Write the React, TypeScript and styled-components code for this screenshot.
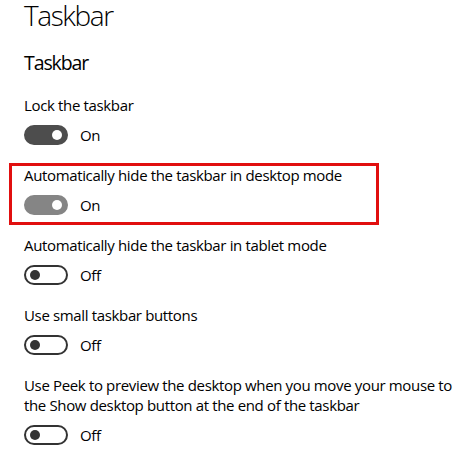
import React from "react";
import styled, { createGlobalStyle } from "styled-components";

const Global = createGlobalStyle`
  html, body { margin: 0; padding: 0; background: #ffffff; }
  body { font-family: "Open Sans", "Noto Sans", sans-serif; color: #000; }
`;

const Page = styled.div`
  padding: 0 6px 0 24px;
  display: flex;
  flex-direction: column;
`;

const Title = styled.h1`
  margin: 0;
  font-weight: 300;
  font-size: 28px;
  line-height: 30px;
  letter-spacing: -1.4px;
`;

const Subtitle = styled.h2`
  margin: 19px 0 18px;
  font-weight: 400;
  font-size: 19.5px;
  line-height: 28px;
  letter-spacing: -1.1px;
`;

const List = styled.div`
  display: flex;
  flex-direction: column;
  gap: 20px;
`;

const Item = styled.div<{ $highlight?: boolean }>`
  position: relative;
  display: flex;
  flex-direction: column;
  gap: 10px;
  ${(p) =>
    p.$highlight
      ? `&::after {
    content: "";
    position: absolute;
    left: -15px;
    top: -2px;
    width: 370px;
    height: 62px;
    border: 3px solid #e10f0f;
    box-sizing: border-box;
  }`
      : ""}
`;

const Label = styled.div`
  font-size: 15px;
  line-height: 20px;
  letter-spacing: -0.35px;
  max-width: 436px;
`;

const ToggleRow = styled.div`
  display: flex;
  align-items: center;
  gap: 12px;
  font-size: 15px;
  line-height: 20px;
  letter-spacing: -0.35px;
`;

const Track = styled.div<{ $on: boolean; $dim?: boolean }>`
  box-sizing: border-box;
  width: 44px;
  height: 20px;
  border-radius: 10px;
  display: flex;
  align-items: center;
  padding: 0 4px;
  justify-content: ${(p) => (p.$on ? "flex-end" : "flex-start")};
  background: ${(p) => (p.$on ? (p.$dim ? "#858585" : "#4d4d4d") : "#fff")};
  border: 2px solid ${(p) => (p.$on ? (p.$dim ? "#858585" : "#4d4d4d") : "#333")};
`;

const Knob = styled.div<{ $on: boolean }>`
  width: 10px;
  height: 10px;
  border-radius: 50%;
  background: ${(p) => (p.$on ? "#fff" : "#333")};
`;

type Setting = { label: string; on: boolean; dim?: boolean; highlight?: boolean };

const settings: Setting[] = [
  { label: "Lock the taskbar", on: true },
  { label: "Automatically hide the taskbar in desktop mode", on: true, dim: true, highlight: true },
  { label: "Automatically hide the taskbar in tablet mode", on: false },
  { label: "Use small taskbar buttons", on: false },
  {
    label:
      "Use Peek to preview the desktop when you move your mouse to the Show desktop button at the end of the taskbar",
    on: false,
  },
];

export default function App() {
  return (
    <>
      <Global />
      <Page>
        <Title>Taskbar</Title>
        <Subtitle>Taskbar</Subtitle>
        <List>
          {settings.map((s) => (
            <Item key={s.label} $highlight={s.highlight}>
              <Label>{s.label}</Label>
              <ToggleRow>
                <Track $on={s.on} $dim={s.dim}>
                  <Knob $on={s.on} />
                </Track>
                <span>{s.on ? "On" : "Off"}</span>
              </ToggleRow>
            </Item>
          ))}
        </List>
      </Page>
    </>
  );
}
